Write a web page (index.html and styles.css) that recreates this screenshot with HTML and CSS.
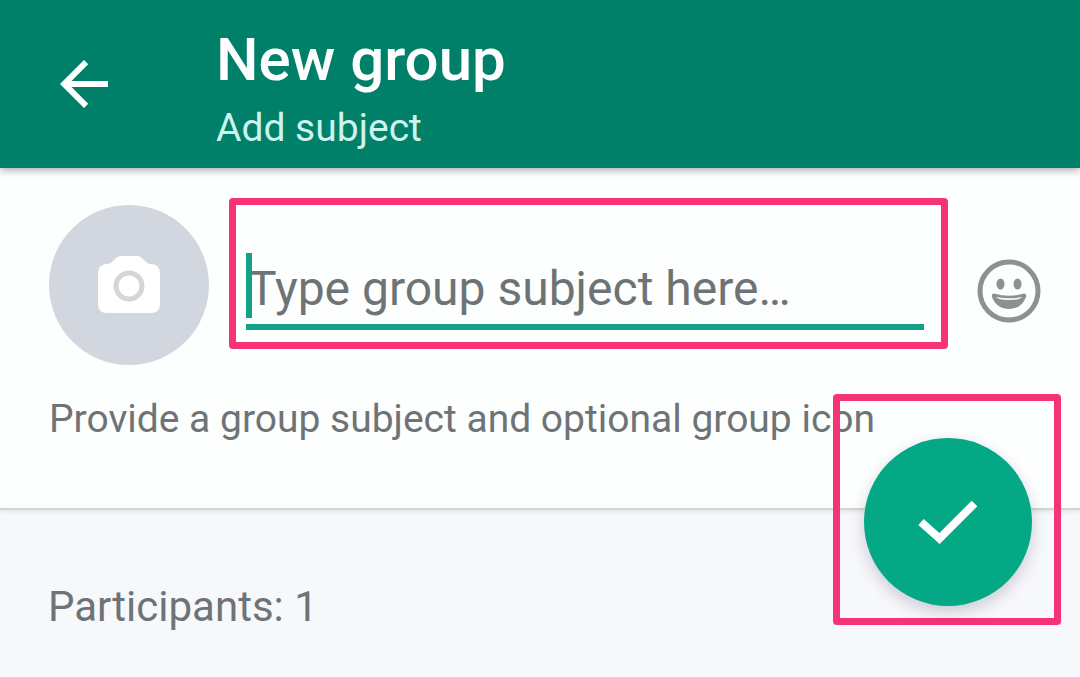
FILE: index.html
```html
<!DOCTYPE html>
<html lang="en">
<head>
<meta charset="utf-8">
<meta name="viewport" content="width=device-width, initial-scale=1">
<title>New group</title>
<link rel="stylesheet" href="styles.css">
</head>
<body>
<header class="app-bar">
  <button class="icon-button back" type="button" aria-label="Back">
    <svg viewBox="0 0 48 48" width="48" height="48" aria-hidden="true"><path d="M48 21H11.500L28.200 4.200 24 0 0 24l24 24 4.200-4.200L11.500 27H48z" fill="#fff"/></svg>
  </button>
  <div class="titles">
    <h1 class="title">New group</h1>
    <p class="subtitle">Add subject</p>
  </div>
</header>
<main class="content">
  <form class="details">
    <div class="subject-row">
      <button class="icon-button avatar" type="button" aria-label="Group icon">
        <svg viewBox="0 0 64 60" width="64" height="60" aria-hidden="true">
          <path d="M24 1h16q3 0 5 2l4 4q2 2 5 2h1q8 1 8 9v31q0 9-9 9H10q-9 0-9-9V18q0-8 8-9h1q3 0 5-2l4-4q2-2 5-2z" fill="#fff"/>
          <circle cx="32" cy="31" r="13" fill="none" stroke="#d4d6da" stroke-width="5"/>
        </svg>
      </button>
      <div class="highlight subject-box">
        <div class="field">
          <input class="subject" type="text" placeholder="Type group subject here…" aria-label="Group subject">
          <span class="caret"></span>
        </div>
      </div>
      <button class="icon-button emoji" type="button" aria-label="Emoji">
        <svg viewBox="0 0 64 64" width="64" height="64" aria-hidden="true">
          <circle cx="32" cy="32" r="29" fill="none" stroke="#8d9193" stroke-width="5"/>
          <ellipse cx="23.500" cy="25" rx="4" ry="5.500" fill="#8d9193"/>
          <ellipse cx="40.500" cy="25" rx="4" ry="5.500" fill="#8d9193"/>
          <path fill-rule="evenodd" d="M17 34.500q15 4.500 30 0 3 0 2 3.500C46 46 40 50 32 50S18 46 15 38q-1-3.500 2-3.500zM19 38q2 3 13 3t13-3q-13 2.500-26 0z" fill="#8d9193"/>
        </svg>
      </button>
    </div>
    <p class="hint">Provide a group subject and optional group icon</p>
    <div class="highlight confirm-box">
      <button class="confirm" type="submit" aria-label="Create group">
        <svg viewBox="0 0 60 44" width="60" height="44" aria-hidden="true"><path d="M3 22 21.500 38.500 56.500 3.500" fill="none" stroke="#fff" stroke-width="8"/></svg>
      </button>
    </div>
  </form>
  <section class="participants">
    <h2 class="participants-title">Participants: 1</h2>
  </section>
</main>
</body>
</html>
```

FILE: styles.css
```css
* {
  box-sizing: border-box;
}

body {
  margin: 0;
  min-height: 100vh;
  display: flex;
  flex-direction: column;
  font-family: Roboto, "Liberation Sans", sans-serif;
  color: #6e7476;
  background: #f7f8fb;
}

h1,
h2,
p {
  margin: 0;
  font-weight: 400;
}

button {
  border: 0;
  padding: 0;
  cursor: pointer;
}

svg {
  display: block;
}

.icon-button {
  flex: none;
  display: grid;
  place-items: center;
  background: none;
}

.app-bar {
  position: relative;
  z-index: 1;
  display: flex;
  align-items: center;
  gap: 108px;
  padding: 24px 60px 14px;
  background: #008069;
  box-shadow: 0 2px 8px rgba(0, 0, 0, 0.35);
}

.back {
  margin-bottom: 10px;
}

.title {
  margin-bottom: 6px;
  font-size: 60px;
  line-height: 72px;
  font-weight: 500;
  color: #fff;
}

.subtitle {
  font-size: 39px;
  line-height: 52px;
  color: #ccf4ec;
}

.content {
  flex: 1;
  display: flex;
  flex-direction: column;
}

.details {
  position: relative;
  padding: 30px 39px 63px 49px;
  background: #fdfefe;
  border-bottom: 2px solid #d3d4d6;
  box-shadow: 0 2px 4px rgba(0, 0, 0, 0.08);
}

.subject-row {
  display: flex;
  align-items: flex-start;
}

.avatar {
  width: 160px;
  height: 160px;
  margin: 7px 20px 0 0;
  border-radius: 50%;
  background: #d1d6df;
}

.highlight {
  border: 7px solid #f63377;
  border-radius: 4px;
}

.subject-box {
  flex: 1;
  min-width: 0;
  padding: 48px 17px 12px 10px;
}

.field {
  position: relative;
}

.subject {
  display: block;
  width: 100%;
  height: 77px;
  padding: 0 0 0 2px;
  border: 0;
  border-bottom: 6px solid #12a287;
  outline: 0;
  background: none;
  font: 400 48px/72px Roboto, "Liberation Sans", sans-serif;
  color: #3b4144;
}

.subject::placeholder {
  color: #6e7476;
  opacity: 1;
}

.caret {
  position: absolute;
  left: 0;
  top: 0;
  width: 6px;
  height: 65px;
  background: #12a287;
}

.emoji {
  margin: 61px 0 0 29px;
}

.hint {
  margin-top: 28px;
  font-size: 39px;
  line-height: 52px;
}

.confirm-box {
  position: absolute;
  top: 226px;
  right: 19px;
  padding: 37px 22px 12px 24px;
}

.confirm {
  display: grid;
  place-items: center;
  width: 168px;
  height: 168px;
  border-radius: 50%;
  background: #05a884;
  box-shadow: 0 6px 16px rgba(30, 20, 60, 0.2);
}

.participants {
  padding: 69px 48px 40px;
}

.participants-title {
  font-size: 42px;
  line-height: 56px;
}
```
